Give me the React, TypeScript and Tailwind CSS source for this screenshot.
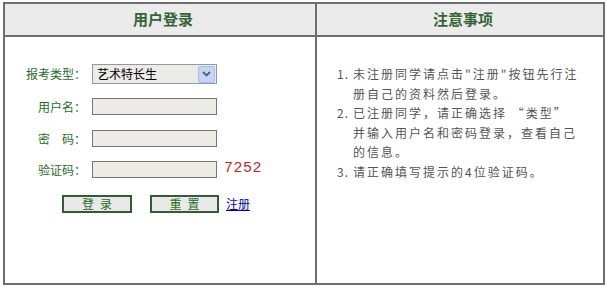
import React from 'react';

const labelCls = "w-[81px] shrink-0 text-right text-[12px] text-[#1f6e1f]";
const inputCls = "ml-[6px] w-[125px] h-[17px] bg-[#ecebe6] border border-[#777] outline-none";

const notes: { num?: string; text: string }[] = [
    { num: "1.", text: '未注册同学请点击"注册"按钮先行注' },
    { text: '册自己的资料然后登录。' },
    { num: "2.", text: '已注册同学，请正确选择 “类型”' },
    { text: '并输入用户名和密码登录，查看自己' },
    { text: '的信息。' },
    { num: "3.", text: '请正确填写提示的4位验证码。' },
];

export default function App() {
    return (
        <div className="w-[607px] h-[287px] bg-white pl-[3px] pt-[2px] font-['Noto_Sans_CJK_SC',sans-serif]">
            <div className="w-[602px] h-[283px] border-2 border-[#6e6e6e] grid grid-cols-[312px_1fr] grid-rows-[33px_1fr]">
                {/* headers */}
                <div className="bg-[#ebebeb] border-r-2 border-b-2 border-[#6e6e6e] flex items-center justify-center pl-[6px] text-[15px] font-bold text-[#336633]">
                    用户登录
                </div>
                <div className="bg-[#ebebeb] border-b-2 border-[#6e6e6e] flex items-center justify-center pl-[6px] text-[15px] font-bold text-[#336633]">
                    注意事项
                </div>

                {/* login form */}
                <div className="border-r-2 border-[#6e6e6e] flex flex-col pt-[27px]">
                    <div className="flex items-center h-[20px]">
                        <span className={labelCls}>报考类型：</span>
                        <div className="ml-[6px] w-[125px] h-[20px] bg-[#ecebe6] border border-[#8a9bb0] flex items-center">
                            <span className="flex-1 pl-[4px] text-[12px] text-black leading-none">艺术特长生</span>
                            <div className="w-[17px] h-[17px] mr-px bg-[#c6d5f5] border border-[#a9bde6] rounded-[2px] flex items-center justify-center">
                                <svg width="9" height="6" viewBox="0 0 9 6">
                                    <path d="M1 1l3.5 3.5L8 1" fill="none" stroke="#4d6185" strokeWidth="1.8" />
                                </svg>
                            </div>
                        </div>
                    </div>
                    <div className="flex items-center h-[17px] mt-[14px]">
                        <span className={labelCls}>用户名：</span>
                        <input className={inputCls} />
                    </div>
                    <div className="flex items-center h-[17px] mt-[15px]">
                        <span className={labelCls}>密　码：</span>
                        <input type="password" className={inputCls} />
                    </div>
                    <div className="flex items-center h-[17px] mt-[14px]">
                        <span className={labelCls}>验证码：</span>
                        <input className={inputCls} />
                        <span className="ml-[7px] font-['Liberation_Mono',monospace] text-[15px] tracking-[0.5px] text-[#cc1f1f]">7252</span>
                    </div>
                    <div className="flex items-center h-[18px] mt-[17px] pl-[57px]">
                        <button className="w-[70px] h-[18px] bg-[#e9e9e9] border-2 border-[#2f5f2f] text-[12px] leading-none text-[#1f6e1f] tracking-[6px] pl-[6px]">登录</button>
                        <button className="ml-[18px] w-[69px] h-[18px] bg-[#e9e9e9] border-2 border-[#2f5f2f] text-[12px] leading-none text-[#1f6e1f] tracking-[6px] pl-[6px]">重置</button>
                        <a href="#" className="ml-[7px] text-[12px] text-[#0000cc] underline">注册</a>
                    </div>
                </div>

                {/* notes */}
                <div className="pt-[27px] pl-[20px] text-[12px] leading-[19.6px] tracking-[2px] text-[#555]">
                    {notes.map((n, i) => (
                        <div key={i} className="flex h-[19.6px] whitespace-nowrap">
                            <span className="w-[16px] shrink-0 tracking-[1px]">{n.num ?? ''}</span>
                            <span>{n.text}</span>
                        </div>
                    ))}
                </div>
            </div>
        </div>
    );
}
